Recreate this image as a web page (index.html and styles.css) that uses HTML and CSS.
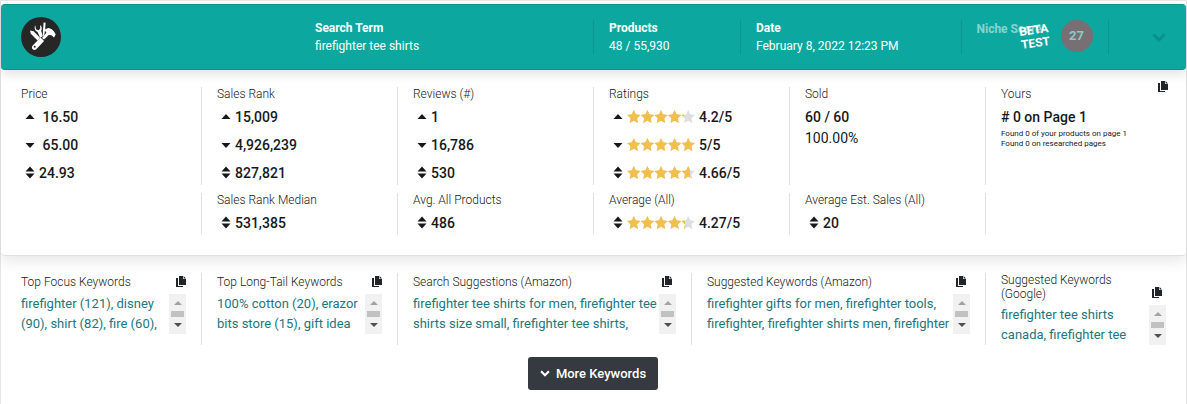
FILE: index.html
```html
<!DOCTYPE html>
<html lang="en">
<head>
  <meta charset="UTF-8">
  <meta name="viewport" content="width=device-width, initial-scale=1.0">
  <title>Product Research</title>
  <link rel="stylesheet" href="styles.css">
</head>
<body>
  <!-- Shared icons -->
  <svg class="sprite" aria-hidden="true">
    <symbol id="up" viewBox="0 0 10 14"><path d="M.5 9L5 4l4.500 5z"/></symbol>
    <symbol id="down" viewBox="0 0 10 14"><path d="M.5 5h9L5 10z"/></symbol>
    <symbol id="sort" viewBox="0 0 10 14"><path d="M.5 5.500L5 .5l4.500 5zM.5 7.500h9L5 12.500z"/></symbol>
    <symbol id="copy" viewBox="0 0 10 11"><path d="M3 0h4v3h3v6H3z"/><path d="M7.600 0L10 2.400H7.600z"/><path d="M0 2h2v8h5v1H0z"/></symbol>
    <symbol id="chevron" viewBox="0 0 14 9"><path d="M1.500 1.500L7 7l5.500-5.500" fill="none" stroke="currentColor" stroke-width="3"/></symbol>
    <symbol id="stars" viewBox="0 0 68 14">
      <path id="star" d="M6.800 0l2 4.200 4.700.7-3.400 3.300.8 4.700-4.100-2.200-4.100 2.200.8-4.700L.1 4.900l4.700-.7z"/>
      <use href="#star" x="13.600"/><use href="#star" x="27.200"/><use href="#star" x="40.800"/><use href="#star" x="54.400"/>
    </symbol>
  </svg>

  <main class="research">
    <header class="topbar">
      <div class="cell logo-cell">
        <svg class="logo" viewBox="0 0 40 40" role="img" aria-label="Logo">
          <circle cx="20" cy="20" r="20" fill="#262626"/>
          <g fill="#fff">
            <path d="M9 13.500l3.600.8 6.400 6.500-2.400 2.600-6.800-6.700z"/>
            <path d="M14.200 8.200l.8 4 2.600 1 1.700-1.800-.3-3.400c2 1.300 2.300 3.800 1.200 5.700l1.500 5.500-2.600 1.500-2.500-5.800c-2.500-.9-3.800-4-2.400-6.700z"/>
            <path d="M22.600 5.500l2 .3-.4 6-1 7h-1.500l.4-7z"/>
            <path d="M23.400 12.800l3.800-1.800c3.500.3 6 3.200 7.500 6.600l-1.700 3-2.500-2.300-2.800-.4-4.700 4.700-2-1.700 4.400-5.200z"/>
            <path d="M19.500 20.500l3.600 3.600-7.600 8c-2.600 2.400-6.200-.8-3.700-3.600z"/>
          </g>
          <circle cx="13.700" cy="29.800" r="1" fill="#262626"/>
        </svg>
      </div>
      <div class="cell"><strong>Search Term</strong><span>firefighter tee shirts</span></div>
      <div class="cell divided"><strong>Products</strong><span>48 / 55,930</span></div>
      <div class="cell divided"><strong>Date</strong><span>February 8, 2022 12:23 PM</span></div>
      <div class="cell divided niche">
        <strong class="faded">Niche Score</strong>
        <span class="score">27</span>
        <b class="beta">BETA<br>TEST</b>
      </div>
      <div class="cell divided toggle-cell">
        <button class="toggle" type="button" aria-label="Toggle details"><svg width="14" height="9"><use href="#chevron"/></svg></button>
      </div>
    </header>

    <section class="stats">
      <button class="copy copy-all" type="button" aria-label="Copy statistics"><svg width="10" height="11"><use href="#copy"/></svg></button>
      <div class="grid">
        <div class="cell">
          <h2>Price</h2>
          <p class="value"><svg class="mark"><use href="#up"/></svg>&nbsp;16.50</p>
          <p class="value"><svg class="mark"><use href="#down"/></svg>&nbsp;65.00</p>
          <p class="value"><svg class="mark"><use href="#sort"/></svg>24.93</p>
        </div>
        <div class="cell divided">
          <h2>Sales Rank</h2>
          <p class="value"><svg class="mark"><use href="#up"/></svg>15,009</p>
          <p class="value"><svg class="mark"><use href="#down"/></svg>4,926,239</p>
          <p class="value"><svg class="mark"><use href="#sort"/></svg>827,821</p>
        </div>
        <div class="cell divided">
          <h2>Reviews (#)</h2>
          <p class="value"><svg class="mark"><use href="#up"/></svg>1</p>
          <p class="value"><svg class="mark"><use href="#down"/></svg>16,786</p>
          <p class="value"><svg class="mark"><use href="#sort"/></svg>530</p>
        </div>
        <div class="cell divided">
          <h2>Ratings</h2>
          <p class="value"><svg class="mark"><use href="#up"/></svg><span class="rating"><svg><use href="#stars"/></svg><span class="fill" style="width: 84%"><svg><use href="#stars"/></svg></span></span>4.2/5</p>
          <p class="value"><svg class="mark"><use href="#down"/></svg><span class="rating"><svg><use href="#stars"/></svg><span class="fill" style="width: 100%"><svg><use href="#stars"/></svg></span></span>5/5</p>
          <p class="value"><svg class="mark"><use href="#sort"/></svg><span class="rating"><svg><use href="#stars"/></svg><span class="fill" style="width: 93.2%"><svg><use href="#stars"/></svg></span></span>4.66/5</p>
        </div>
        <div class="cell divided">
          <h2>Sold</h2>
          <p class="value">60 / 60</p>
          <p class="percent">100.00%</p>
        </div>
        <div class="cell divided">
          <h2>Yours</h2>
          <p class="value"># 0 on Page 1</p>
          <p class="note">Found 0 of your products on page 1<br>Found 0 on researched pages</p>
        </div>

        <div class="cell"></div>
        <div class="cell divided">
          <h2>Sales Rank Median</h2>
          <p class="value"><svg class="mark"><use href="#sort"/></svg>531,385</p>
        </div>
        <div class="cell divided">
          <h2>Avg. All Products</h2>
          <p class="value"><svg class="mark"><use href="#sort"/></svg>486</p>
        </div>
        <div class="cell divided">
          <h2>Average (All)</h2>
          <p class="value"><svg class="mark"><use href="#sort"/></svg><span class="rating"><svg><use href="#stars"/></svg><span class="fill" style="width: 85.4%"><svg><use href="#stars"/></svg></span></span>4.27/5</p>
        </div>
        <div class="cell divided">
          <h2>Average Est. Sales (All)</h2>
          <p class="value"><svg class="mark"><use href="#sort"/></svg>20</p>
        </div>
        <div class="cell divided"></div>
      </div>
    </section>

    <section class="keywords">
      <div class="keyword-grid">
        <div class="cell">
          <div class="head"><h2>Top Focus Keywords</h2><button class="copy" type="button" aria-label="Copy focus keywords"><svg width="10" height="11"><use href="#copy"/></svg></button></div>
          <div class="box">
            <p><a href="#">firefighter (121)</a>, <a href="#">disney (90)</a>, <a href="#">shirt (82)</a>, <a href="#">fire (60)</a>,</p>
            <div class="scroll"><i></i></div>
          </div>
        </div>
        <div class="cell divided">
          <div class="head"><h2>Top Long-Tail Keywords</h2><button class="copy" type="button" aria-label="Copy long-tail keywords"><svg width="10" height="11"><use href="#copy"/></svg></button></div>
          <div class="box">
            <p><a href="#">100% cotton (20)</a>, <a href="#">erazor bits store (15)</a>, <a href="#">gift idea</a></p>
            <div class="scroll"><i></i></div>
          </div>
        </div>
        <div class="cell divided suggested">
          <div class="head"><h2>Search Suggestions (Amazon)</h2><button class="copy" type="button" aria-label="Copy search suggestions"><svg width="10" height="11"><use href="#copy"/></svg></button></div>
          <div class="box">
            <p><a href="#">firefighter tee shirts for men</a>, <a href="#">firefighter tee shirts size small</a>, <a href="#">firefighter tee shirts</a>,</p>
            <div class="scroll"><i></i></div>
          </div>
        </div>
        <div class="cell divided suggested">
          <div class="head"><h2>Suggested Keywords (Amazon)</h2><button class="copy" type="button" aria-label="Copy Amazon keywords"><svg width="10" height="11"><use href="#copy"/></svg></button></div>
          <div class="box">
            <p><a href="#">firefighter gifts for men</a>, <a href="#">firefighter tools</a>, <a href="#">firefighter</a>, <a href="#">firefighter shirts men</a>, <a href="#">firefighter</a></p>
            <div class="scroll"><i></i></div>
          </div>
        </div>
        <div class="cell divided suggested">
          <div class="head"><h2>Suggested Keywords (Google)</h2><button class="copy" type="button" aria-label="Copy Google keywords"><svg width="10" height="11"><use href="#copy"/></svg></button></div>
          <div class="box">
            <p><a href="#">firefighter tee shirts canada</a>, <a href="#">firefighter tee</a></p>
            <div class="scroll"><i></i></div>
          </div>
        </div>
      </div>
      <button class="more" type="button"><svg width="10" height="7"><use href="#chevron"/></svg>More Keywords</button>
    </section>
  </main>
</body>
</html>
```
FILE: styles.css
```css
* {
  margin: 0;
  padding: 0;
  box-sizing: border-box;
}
body {
  background: #fff;
  color: #16191c;
  font-family: Roboto, sans-serif;
  font-size: 12px;
  line-height: 14px;
}
button {
  border: none;
  background: none;
  font-family: inherit;
  cursor: pointer;
}
svg {
  display: block;
  fill: currentColor;
}
.sprite {
  position: absolute;
  width: 0;
  height: 0;
}
.research {
  min-height: 100vh;
  border: 1px solid #e6e6e6;
  border-bottom: none;
  padding-top: 3px;
}
.cell {
  min-width: 0;
  padding: 0 15px;
  border-left: 1px solid transparent;
}
.divided {
  border-left-color: #dee2e6;
}

/* Top bar */
.topbar {
  position: relative;
  display: grid;
  grid-template-columns: 4fr 4fr 2fr 3fr 2fr 1fr;
  align-items: center;
  height: 66px;
  padding: 0 5px 0 4px;
  background: #0ca89f;
  border: 1px solid #0b958d;
  border-width: 1px 0;
  border-radius: 4px;
  box-shadow: 0 4px 12px rgba(0, 0, 0, 0.12);
  color: #fff;
}
.topbar .cell {
  display: flex;
  flex-direction: column;
  justify-content: center;
  height: 34px;
  line-height: 18px;
}
.topbar .divided {
  border-left-color: #0b968f;
}
.topbar strong {
  font-weight: 700;
}
.logo {
  flex: none;
  width: 40px;
  height: 40px;
}
.topbar .niche {
  position: relative;
  flex-direction: row;
  justify-content: space-between;
}
.faded {
  opacity: 0.5;
  white-space: nowrap;
}
.score {
  width: 32px;
  height: 32px;
  border-radius: 50%;
  background: #776f73;
  color: #8cc9c5;
  font-size: 13px;
  font-weight: 700;
  line-height: 32px;
  text-align: center;
}
.beta {
  position: absolute;
  top: 4px;
  left: 58px;
  line-height: 13px;
  text-align: center;
  transform: rotate(-8deg);
}
.topbar .toggle-cell {
  align-items: flex-end;
}
.toggle {
  color: #0b8f88;
}

/* Stats */
.stats {
  position: relative;
  padding: 17px 5px 20px 4px;
  border-bottom: 1px solid #dee2e6;
  border-radius: 4px;
  box-shadow: 0 6px 14px rgba(0, 0, 0, 0.09);
}
.grid {
  display: grid;
  grid-template-columns: repeat(6, 1fr);
  row-gap: 8px;
}
.grid .cell {
  padding-bottom: 2px;
}
h2 {
  font-size: 12px;
  font-weight: 300;
}
.value {
  display: flex;
  align-items: center;
  margin-top: 8px;
  font-size: 14px;
  font-weight: 500;
  line-height: 20px;
}
h2 + .value {
  margin-top: 6px;
}
.mark {
  width: 10px;
  height: 14px;
  margin: 0 4px;
}
.rating {
  position: relative;
  margin-right: 4px;
  color: #dcdee0;
}
.rating svg {
  width: 68px;
  height: 14px;
}
.fill {
  position: absolute;
  top: 0;
  left: 0;
  overflow: hidden;
  color: #f1bf4b;
}
.percent {
  font-size: 14px;
  line-height: 22px;
}
.note {
  margin-top: 2px;
  font-size: 8px;
  line-height: 10px;
}
.copy {
  color: #212529;
}
.copy-all {
  position: absolute;
  top: 11px;
  right: 18px;
}

/* Keywords */
.keywords {
  padding: 17px 5px 14px 4px;
  text-align: center;
}
.keyword-grid {
  display: grid;
  grid-template-columns: 2fr 2fr 3fr 3fr 2fr;
  text-align: left;
}
.keyword-grid .cell {
  min-height: 72px;
}
.head {
  display: flex;
  align-items: center;
  justify-content: space-between;
  min-height: 17px;
}
.head .copy {
  align-self: flex-end;
  padding-bottom: 3px;
}
.suggested .copy {
  margin-right: 4px;
}
.box {
  display: flex;
  justify-content: space-between;
  height: 40px;
  margin-top: 4px;
  overflow: hidden;
}
.box p {
  font-size: 13px;
  line-height: 20px;
  color: #23767c;
}
.box a {
  color: inherit;
  text-decoration: none;
}
.scroll {
  display: flex;
  flex: none;
  flex-direction: column;
  align-items: center;
  justify-content: space-between;
  width: 17px;
  padding: 7px 0;
  background: #f1f1f1;
}
.scroll::before,
.scroll::after {
  content: "";
  border: 4px solid transparent;
  border-top: none;
  border-bottom-color: #a3a3a3;
}
.scroll::after {
  border-top: 4px solid #505050;
  border-bottom: none;
}
.scroll i {
  width: 13px;
  height: 6px;
  background: #c1c1c1;
}
.more {
  display: inline-flex;
  align-items: center;
  gap: 6px;
  height: 33px;
  margin-top: 12px;
  padding: 0 12px;
  border-radius: 3px;
  background: #343a40;
  color: #fff;
  font-size: 13px;
  font-weight: 500;
}
```
